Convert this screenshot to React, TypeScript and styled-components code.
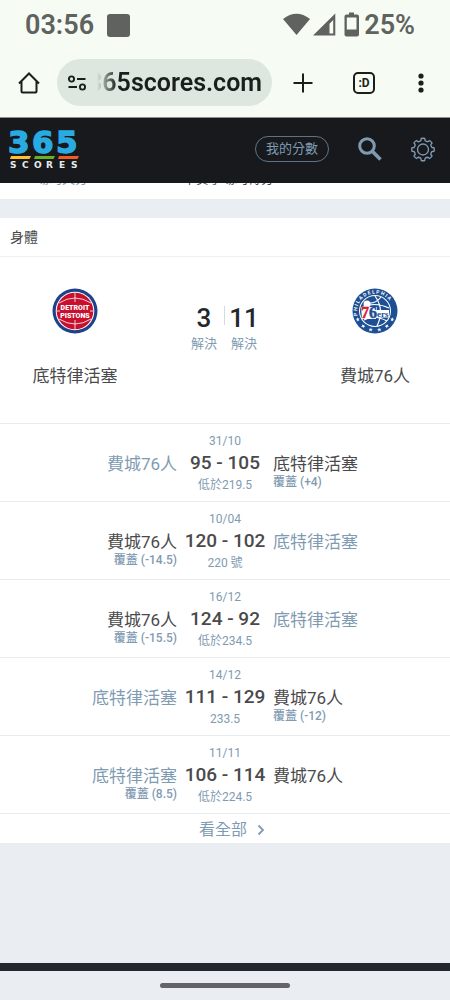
import React from "react";
import styled, { createGlobalStyle } from "styled-components";

const ink = "#4a4a4c";
const steel = "#7f9bb2";
const mist = "#eaeef2";
const chrome = "#f6fcf4";

const GlobalStyle = createGlobalStyle`
  *, *::before, *::after { box-sizing: border-box; }
  body {
    margin: 0;
    background: ${mist};
    color: ${ink};
    font-family: Roboto, "Noto Sans CJK TC", sans-serif;
  }
  button, input { font: inherit; color: inherit; background: none; border: 0; padding: 0; margin: 0; }
  h2, h3, p, ol { margin: 0; padding: 0; font-weight: 400; }
  svg { display: block; }
`;

const Page = styled.div`
  display: flex;
  flex-direction: column;
  min-height: 100vh;
`;

const StatusBar = styled.div`
  display: flex;
  align-items: center;
  justify-content: space-between;
  height: 50px;
  padding: 0 35px 0 25px;
  background: ${chrome};
  color: #60625f;
  font-size: 27px;
  font-weight: 600;
  line-height: 32px;
`;

const StatusGroup = styled.div<{ $gap: number }>`
  display: flex;
  align-items: center;
  gap: ${(p) => p.$gap}px;
`;

const NoticeSquare = styled.span`
  width: 23px;
  height: 23px;
  border-radius: 3px;
  background: #60625f;
`;

const BrowserBar = styled.div`
  display: flex;
  align-items: center;
  gap: 16px;
  padding: 9px 21px 11px 17px;
  background: ${chrome};
  border-bottom: 1px solid #8b908c;
  color: #1a1f1b;
`;

const IconButton = styled.button<{ $width?: number }>`
  display: flex;
  align-items: center;
  justify-content: center;
  flex: none;
  width: ${(p) => p.$width ?? 24}px;
  height: 26px;
  cursor: pointer;
`;

const AddressPill = styled.div`
  display: flex;
  align-items: center;
  flex: 1;
  min-width: 0;
  gap: 8px;
  height: 47px;
  padding: 0 10px 0 8px;
  border-radius: 24px;
  background: #dde7df;
`;

const AddressClip = styled.div`
  display: flex;
  justify-content: flex-end;
  flex: 1;
  min-width: 0;
  overflow: hidden;
  mask-image: linear-gradient(to right, transparent, #000 20px);
`;

const AddressInput = styled.input`
  flex: none;
  width: 200px;
  text-align: right;
  font-size: 25px;
  font-weight: 600;
  line-height: 32px;
`;

const BrowserActions = styled.div`
  display: flex;
  gap: 37px;
  padding-left: 3px;
`;

const SiteHeader = styled.header`
  display: flex;
  align-items: center;
  justify-content: space-between;
  height: 65px;
  padding: 0 15px 3px 9px;
  background: #17191d;
  color: ${steel};
`;

const HeaderActions = styled.div`
  display: flex;
  align-items: center;
  gap: 29px;
`;

const ScoresButton = styled.button`
  height: 26px;
  padding: 0 10px;
  border: 1px solid #5d7487;
  border-radius: 13px;
  font-size: 13px;
  line-height: 24px;
  cursor: pointer;
`;

const ScrolledRow = styled.div`
  display: grid;
  grid-template-columns: 1fr 96px 1fr;
  align-content: end;
  height: 16px;
  padding-bottom: 12px;
  overflow: hidden;
  background: #fff;
  font-size: 13px;
  line-height: 16px;
`;

const ScrolledText = styled.span<{ $muted?: boolean }>`
  color: ${(p) => (p.$muted ? steel : ink)};
  padding-left: ${(p) => (p.$muted ? 36 : 6)}px;
  white-space: nowrap;
`;

const Card = styled.section`
  margin-top: 19px;
  background: #fff;
`;

const CardTitle = styled.h2`
  padding: 9px 10px;
  border-bottom: 1px solid #eef1f3;
  font-size: 14px;
  line-height: 20px;
`;

const Summary = styled.div`
  display: grid;
  grid-template-columns: 1fr 1fr 1fr;
  height: 167px;
  padding-top: 31px;
  border-bottom: 1px solid #e8ecee;
`;

const Team = styled.div`
  display: flex;
  flex-direction: column;
  align-items: center;
  gap: 30px;
`;

const TeamTitle = styled.h3`
  font-size: 17px;
  line-height: 24px;
`;

const Tally = styled.div`
  display: flex;
  justify-content: center;
  padding: 14px 2px 0 0;
`;

const TallyItem = styled.div`
  width: 40px;
  text-align: center;
  font-size: 13px;
  line-height: 20px;
  color: ${steel};
`;

const TallyNumber = styled.p<{ $divided?: boolean }>`
  position: relative;
  color: #23282d;
  font-size: 26px;
  font-weight: 500;
  line-height: 32px;

  &::before {
    content: "";
    display: ${(p) => (p.$divided ? "block" : "none")};
    position: absolute;
    left: 0;
    top: 4px;
    width: 1px;
    height: 19px;
    background: #cfdbe5;
  }
`;

const GameList = styled.ol`
  list-style: none;
`;

const Game = styled.li`
  display: grid;
  grid-template-columns: 1fr 96px 1fr;
  height: 78px;
  border-bottom: 1px solid #e8ecee;
`;

const Side = styled.div<{ $align: "left" | "right" }>`
  padding-top: 30px;
  text-align: ${(p) => p.$align};
`;

const SideName = styled.p<{ $winner: boolean }>`
  color: ${(p) => (p.$winner ? ink : steel)};
  font-size: 17px;
  line-height: 20px;
`;

const Cover = styled.p`
  color: ${steel};
  font-size: 12px;
  font-weight: 500;
  line-height: 16px;
`;

const Middle = styled.div`
  padding-top: 9px;
  text-align: center;
  white-space: nowrap;
`;

const Small = styled.p`
  color: ${steel};
  font-size: 12px;
  line-height: 16px;
`;

const Score = styled.p`
  font-size: 19px;
  font-weight: 500;
  line-height: 28px;
`;

const ViewAll = styled.a`
  display: flex;
  align-items: center;
  justify-content: center;
  gap: 10px;
  height: 29px;
  padding: 2px 0 0 14px;
  color: ${steel};
  font-size: 16px;
  line-height: 24px;
  text-decoration: none;
`;

const FooterStrip = styled.div`
  height: 8px;
  margin-top: auto;
  background: #22282e;
`;

const GestureBar = styled.div`
  display: flex;
  justify-content: center;
  height: 29px;
  padding-top: 12px;

  &::before {
    content: "";
    width: 130px;
    height: 5px;
    border-radius: 3px;
    background: #626467;
  }
`;

const SignalIcons = () => (
  <svg width="77" height="26" viewBox="0 0 77 26" fill="#60625f" aria-hidden="true">
    <path d="M0 6Q13.500-4.500 27 6L13.500 22Z" transform="translate(0 1)" />
    <path fillRule="evenodd" d="M52.300 1.500V23.500H30ZM50.200 8L46.500 11.800V21.500H50.200Z" />
    <path fillRule="evenodd" d="M66 0.500h5v2h3q2 0 2 2v18q0 2-2 2H63.500q-2 0-2-2V4.500q0-2 2-2H66ZM63.800 5.500v12h9.700V5.500Z" />
  </svg>
);

const Logo = () => (
  <svg width="72" height="40" viewBox="0 0 72 40" role="img" aria-label="365 Scores">
    <text x="-1 23 47" y="23.500" fill="#29abe2" stroke="#29abe2" strokeWidth="1.400" fontFamily="DejaVu Sans" fontWeight="700" fontSize="31">365</text>
    <path d="M2 27H22L20.500 30H1Z" fill="#fdc02f" />
    <path d="M26 27H46L44.500 30H25Z" fill="#6ab023" />
    <path d="M50 27H70L68.500 30H49Z" fill="#f15a24" />
    <text x="1 13 25 37 50 62" y="39" fill="#e8eaec" fontFamily="DejaVu Sans" fontWeight="700" fontSize="9">SCORES</text>
  </svg>
);

const gearPath = (() => {
  const teeth = 8;
  const points: string[] = [];
  for (let i = 0; i < teeth; i++) {
    const base = (i * 2 * Math.PI) / teeth - Math.PI / 2;
    const at = (r: number, a: number) =>
      `${(12.5 + r * Math.cos(base + a)).toFixed(2)} ${(12.5 + r * Math.sin(base + a)).toFixed(2)}`;
    points.push(`${i ? "L" : "M"}${at(9.6, -0.22)}L${at(11.6, -0.16)}Q${at(12, 0)} ${at(11.6, 0.16)}L${at(9.6, 0.22)}Q${at(8.8, 0.393)} ${at(9.6, 0.565)}`);
  }
  return points.join("") + "Z";
})();

const PistonsBadge = () => (
  <svg width="46" height="46" viewBox="0 0 46 46" role="img" aria-label="Detroit Pistons">
    <circle cx="23" cy="23" r="22.500" fill="#1d428a" />
    <circle cx="23" cy="23" r="19.300" fill="#fff" />
    <circle cx="23" cy="23" r="18.300" fill="#c8102e" />
    <g fill="none" stroke="#fff" strokeWidth="0.8">
      <path d="M7 15Q23 5 39 15M7 31Q23 41 39 31M23 5V14M23 32V41M5 23H8M38 23H41" />
    </g>
    <rect x="8" y="15" width="30" height="16" fill="#c8102e" />
    <g fill="#fff" fontFamily="Roboto" fontWeight="900" fontSize="7" textAnchor="middle">
      <text x="23" y="22">DETROIT</text>
      <text x="23" y="29.500">PISTONS</text>
    </g>
  </svg>
);

const SixersBadge = () => (
  <svg width="46" height="46" viewBox="0 0 46 46" role="img" aria-label="Philadelphia 76ers">
    <defs>
      <path id="ring" d="M6 29.500A18 18 0 1 1 40 29.500" />
    </defs>
    <circle cx="23" cy="23" r="22.500" fill="#1d4f94" />
    <circle cx="23" cy="23" r="16" fill="#fff" />
    <circle cx="23" cy="23" r="15" fill="#1d4f94" />
    <text fill="#fff" fontFamily="Roboto" fontWeight="700" fontSize="5">
      <textPath href="#ring" startOffset="2">P H I L A D E L P H I A</textPath>
    </text>
    <g fill="none" stroke="#fff" strokeWidth="1.200">
      <path d="M9 20Q22 13 37 20M23 8Q33 22 25 38M12 14Q22 18 29 9M12 32Q22 26 35 33" />
    </g>
    <circle cx="15" cy="16" r="3.500" fill="#fff" />
    <path d="M9 19H25V22H37V29.500H24V31H10Z" fill="#fff" />
    <g fontFamily="Liberation Serif" fontWeight="700">
      <text x="9" y="30" fontSize="16" fill="#d8172f" stroke="#d8172f" strokeWidth="0.5">7</text>
      <text x="17" y="30" fontSize="16" fill="#1d4f94" stroke="#1d4f94" strokeWidth="0.5">6</text>
      <text x="25" y="29" fontSize="9" fill="#1d4f94">ers</text>
    </g>
    <g fill="#fff">
      {[-64, -38, -13, 13, 38, 64].map((angle) => (
        <path
          key={angle}
          transform={`rotate(${angle} 23 23)`}
          d="M23 40L23.600 41.500H25.200L24 42.500L24.400 44L23 43.100L21.600 44L22 42.500L20.800 41.500H22.400Z"
        />
      ))}
    </g>
  </svg>
);

interface GameData {
  date: string;
  home: string;
  away: string;
  score: string;
  total: string;
  winner: "home" | "away";
  homeCover?: string;
  awayCover?: string;
}

const PISTONS = "底特律活塞";
const SIXERS = "費城76人";

const games: GameData[] = [
  { date: "31/10", home: SIXERS, away: PISTONS, score: "95 - 105", total: "低於219.5", winner: "away", awayCover: "覆蓋 (+4)" },
  { date: "10/04", home: SIXERS, away: PISTONS, score: "120 - 102", total: "220 號", winner: "home", homeCover: "覆蓋 (-14.5)" },
  { date: "16/12", home: SIXERS, away: PISTONS, score: "124 - 92", total: "低於234.5", winner: "home", homeCover: "覆蓋 (-15.5)" },
  { date: "14/12", home: PISTONS, away: SIXERS, score: "111 - 129", total: "233.5", winner: "away", awayCover: "覆蓋 (-12)" },
  { date: "11/11", home: PISTONS, away: SIXERS, score: "106 - 114", total: "低於224.5", winner: "away", homeCover: "覆蓋 (8.5)" },
];

export default function App() {
  return (
    <Page>
      <GlobalStyle />
      <StatusBar>
        <StatusGroup $gap={13}>
          <span>03:56</span>
          <NoticeSquare />
        </StatusGroup>
        <StatusGroup $gap={4}>
          <SignalIcons />
          <span>25%</span>
        </StatusGroup>
      </StatusBar>

      <BrowserBar>
        <IconButton aria-label="Home">
          <svg width="24" height="24" viewBox="0 0 24 24" fill="none" stroke="currentColor" strokeWidth="2">
            <path d="M2 12.500L12 2.500L22 12.500M4.500 10.500V20.500Q4.500 21.500 5.500 21.500H18.500Q19.500 21.500 19.500 20.500V10.500" />
          </svg>
        </IconButton>
        <AddressPill>
          <IconButton aria-label="Site information">
            <svg width="20" height="18" viewBox="0 0 20 18" fill="none" stroke="currentColor" strokeWidth="1.900">
              <circle cx="4.500" cy="5" r="2.600" />
              <circle cx="15.500" cy="13" r="2.600" />
              <path d="M10 5H18.500M1.500 13H10" />
            </svg>
          </IconButton>
          <AddressClip>
            <AddressInput type="text" aria-label="Address" defaultValue="365scores.com" />
          </AddressClip>
        </AddressPill>
        <BrowserActions>
          <IconButton aria-label="New tab">
            <svg width="20" height="20" viewBox="0 0 20 20" stroke="currentColor" strokeWidth="2">
              <path d="M10 0.500V19.500M0.500 10H19.500" />
            </svg>
          </IconButton>
          <IconButton aria-label="Tabs">
            <svg width="22" height="22" viewBox="0 0 22 22">
              <rect x="1" y="1" width="20" height="20" rx="4" fill="none" stroke="currentColor" strokeWidth="2" />
              <text x="11" y="15" fill="currentColor" fontFamily="Roboto" fontWeight="700" fontSize="12" textAnchor="middle">:D</text>
            </svg>
          </IconButton>
          <IconButton $width={16} aria-label="Menu">
            <svg width="6" height="20" viewBox="0 0 6 20" fill="currentColor">
              <circle cx="3" cy="3" r="2.600" />
              <circle cx="3" cy="10" r="2.600" />
              <circle cx="3" cy="17" r="2.600" />
            </svg>
          </IconButton>
        </BrowserActions>
      </BrowserBar>

      <SiteHeader>
        <Logo />
        <HeaderActions>
          <ScoresButton>我的分數</ScoresButton>
          <IconButton aria-label="Search">
            <svg width="24" height="24" viewBox="0 0 24 24" fill="none" stroke="currentColor">
              <circle cx="9" cy="9" r="7.300" strokeWidth="3" />
              <path d="M14.300 14.300L22.500 22.500" strokeWidth="3.600" />
            </svg>
          </IconButton>
          <IconButton aria-label="Settings">
            <svg width="25" height="25" viewBox="0 0 25 25" fill="none" stroke="currentColor" strokeWidth="1.400" strokeLinejoin="round">
              <path d={gearPath} />
              <circle cx="12.500" cy="12.500" r="5.700" />
            </svg>
          </IconButton>
        </HeaderActions>
      </SiteHeader>

      <main>
        <ScrolledRow>
          <ScrolledText $muted>場均失分</ScrolledText>
          <ScrolledText>本賽季場均得分</ScrolledText>
        </ScrolledRow>

        <Card>
          <CardTitle>身體</CardTitle>
          <Summary>
            <Team>
              <PistonsBadge />
              <TeamTitle>{PISTONS}</TeamTitle>
            </Team>
            <Tally>
              <TallyItem>
                <TallyNumber>3</TallyNumber>
                解決
              </TallyItem>
              <TallyItem>
                <TallyNumber $divided>11</TallyNumber>
                解決
              </TallyItem>
            </Tally>
            <Team>
              <SixersBadge />
              <TeamTitle>{SIXERS}</TeamTitle>
            </Team>
          </Summary>

          <GameList>
            {games.map((game) => (
              <Game key={game.date}>
                <Side $align="right">
                  <SideName $winner={game.winner === "home"}>{game.home}</SideName>
                  {game.homeCover && <Cover>{game.homeCover}</Cover>}
                </Side>
                <Middle>
                  <Small>{game.date}</Small>
                  <Score>{game.score}</Score>
                  <Small>{game.total}</Small>
                </Middle>
                <Side $align="left">
                  <SideName $winner={game.winner === "away"}>{game.away}</SideName>
                  {game.awayCover && <Cover>{game.awayCover}</Cover>}
                </Side>
              </Game>
            ))}
          </GameList>

          <ViewAll href="#all">
            看全部
            <svg width="8" height="12" viewBox="0 0 8 12" fill="none" stroke="currentColor" strokeWidth="1.800">
              <path d="M1.500 1.500L6 6L1.500 10.500" />
            </svg>
          </ViewAll>
        </Card>
      </main>

      <FooterStrip />
      <GestureBar />
    </Page>
  );
}
